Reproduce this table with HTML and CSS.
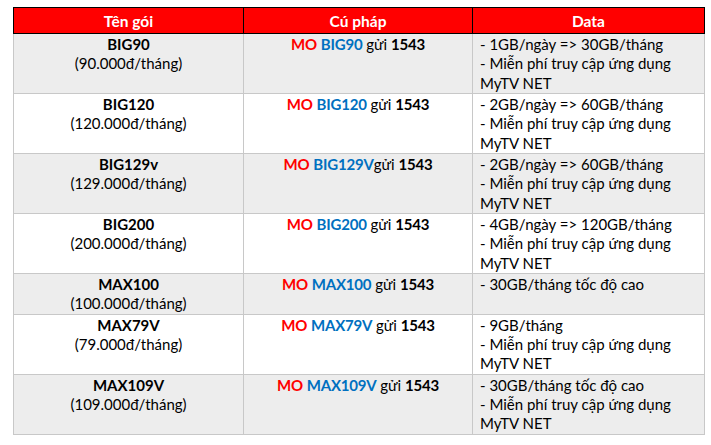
FILE: index.html
```html
<!DOCTYPE html>
<html lang="vi">
<head>
<meta charset="utf-8">
<link rel="stylesheet" href="styles.css">
</head>
<body>
<table class="plans">
  <colgroup>
    <col class="c1"><col class="c2"><col class="c3">
  </colgroup>
  <thead>
    <tr><th>Tên gói</th><th>Cú pháp</th><th>Data</th></tr>
  </thead>
  <tbody>
    <tr class="alt h3">
      <td class="name"><b>BIG90</b><br>(90.000đ/tháng)</td>
      <td class="syn"><b class="mo">MO</b> <b class="code">BIG90</b> gửi <b>1543</b></td>
      <td class="data">- 1GB/ngày =&gt; 30GB/tháng<br>- Miễn phí truy cập ứng dụng<br>MyTV NET</td>
    </tr>
    <tr class="h3">
      <td class="name"><b>BIG120</b><br>(120.000đ/tháng)</td>
      <td class="syn"><b class="mo">MO</b> <b class="code">BIG120</b> gửi <b>1543</b></td>
      <td class="data">- 2GB/ngày =&gt; 60GB/tháng<br>- Miễn phí truy cập ứng dụng<br>MyTV NET</td>
    </tr>
    <tr class="alt h3">
      <td class="name"><b>BIG129v</b><br>(129.000đ/tháng)</td>
      <td class="syn"><b class="mo">MO</b> <b class="code">BIG129V</b>gửi <b>1543</b></td>
      <td class="data">- 2GB/ngày =&gt; 60GB/tháng<br>- Miễn phí truy cập ứng dụng<br>MyTV NET</td>
    </tr>
    <tr class="h3">
      <td class="name"><b>BIG200</b><br>(200.000đ/tháng)</td>
      <td class="syn"><b class="mo">MO</b> <b class="code">BIG200</b> gửi <b>1543</b></td>
      <td class="data">- 4GB/ngày =&gt; 120GB/tháng<br>- Miễn phí truy cập ứng dụng<br>MyTV NET</td>
    </tr>
    <tr class="alt h2">
      <td class="name"><b>MAX100</b><br>(100.000đ/tháng)</td>
      <td class="syn"><b class="mo">MO</b> <b class="code">MAX100</b> gửi <b>1543</b></td>
      <td class="data">- 30GB/tháng tốc độ cao</td>
    </tr>
    <tr class="h3">
      <td class="name"><b>MAX79V</b><br>(79.000đ/tháng)</td>
      <td class="syn"><b class="mo">MO</b> <b class="code">MAX79V</b> gửi <b>1543</b></td>
      <td class="data">- 9GB/tháng<br>- Miễn phí truy cập ứng dụng<br>MyTV NET</td>
    </tr>
    <tr class="alt h3">
      <td class="name"><b>MAX109V</b><br>(109.000đ/tháng)</td>
      <td class="syn"><b class="mo">MO</b> <b class="code">MAX109V</b> gửi <b>1543</b></td>
      <td class="data">- 30GB/tháng tốc độ cao<br>- Miễn phí truy cập ứng dụng<br>MyTV NET</td>
    </tr>
  </tbody>
</table>
</body>
</html>
```
FILE: styles.css
```css
html, body {
  margin: 0;
  background: #ffffff;
}
body {
  padding: 7px 0 0 13px;
  font-family: "Lato", "Open Sans", sans-serif;
  font-size: 15px;
  color: #000;
}
.plans {
  border-collapse: collapse;
  table-layout: fixed;
  width: 691px;
}
.c1 { width: 230px; }
.c2 { width: 229px; }
.c3 { width: 232px; }
.plans th {
  background: #ff0000;
  color: #fff;
  font-weight: 700;
  font-size: 15.5px;
  height: 25px;
  padding: 0;
  border: 1px solid #000;
  line-height: 20px;
  text-align: center;
}
.plans td {
  border: 1px solid #c8c8c8;
  padding: 1px 7px 0;
  line-height: 19.3px;
  vertical-align: top;
}
.plans tr.h3 td { height: 58px; }
.plans tr.h2 td { height: 38px; }
.plans tr.alt td { background: #ededed; }
.name, .syn { text-align: center; }
.syn b { letter-spacing: -0.2px; }
.data { text-align: left; }
.mo { color: #ff0000; }
.code { color: #0070c0; }
```
